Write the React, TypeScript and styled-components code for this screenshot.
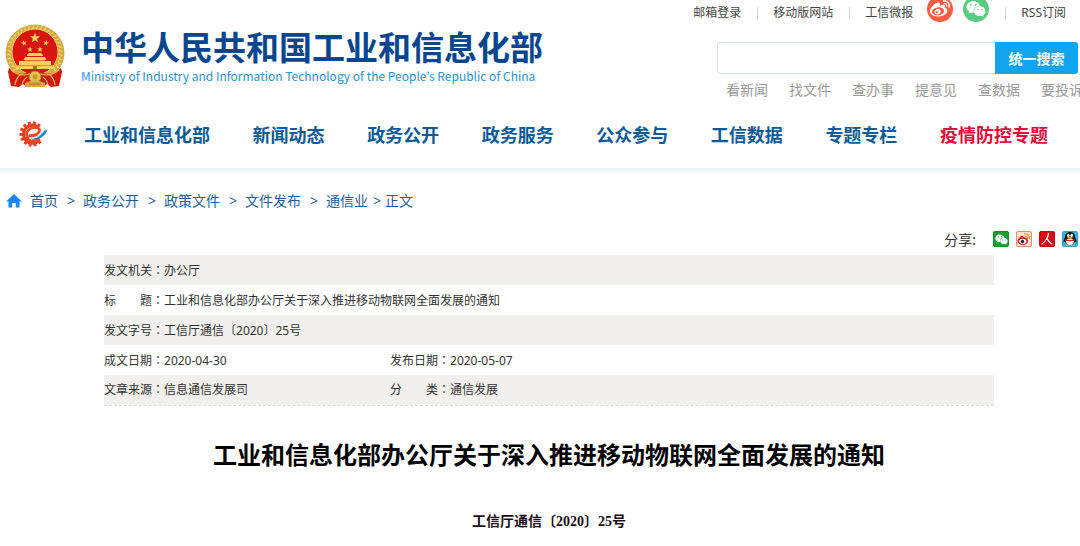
import React from 'react';
import styled, { createGlobalStyle } from 'styled-components';
import { FaWeibo, FaWeixin } from 'react-icons/fa';

const sans = '"Noto Sans", "Noto Sans CJK SC", sans-serif';
const cjk = '"Noto Sans CJK SC", sans-serif';

const GlobalStyle = createGlobalStyle`
  *, *::before, *::after { box-sizing: border-box; }
  body {
    margin: 0;
    background: #fff;
    color: #333;
    font-family: ${sans};
    font-size: 12px;
    overflow: hidden;
  }
  a { color: inherit; text-decoration: none; white-space: nowrap; }
  ul, ol { list-style: none; margin: 0; padding: 0; }
  h1, h2, p { margin: 0; }
  svg { display: block; }
`;

const Header = styled.header`
  display: flex;
  justify-content: space-between;
  height: 102px;
  overflow: hidden;
`;

const Brand = styled.a`
  display: flex;
  align-items: flex-start;
  gap: 16px;
  padding: 24px 0 0 5px;
`;

const BrandText = styled.span`
  display: flex;
  flex-direction: column;
  gap: 2px;
  padding-top: 2px;
`;

const BrandName = styled.strong`
  color: #06468f;
  font-family: ${cjk};
  font-size: 33px;
  line-height: 40px;
  font-weight: 700;
`;

const BrandEnglish = styled.span`
  color: #2b93d1;
  font-family: "Noto Sans CJK KR", sans-serif;
  font-size: 12px;
  line-height: 16px;
`;

const HeaderSide = styled.div`
  width: 363px;
  flex: none;
`;

const TopLinks = styled.nav`
  display: flex;
  align-items: flex-start;
  justify-content: flex-end;
  height: 42px;
  padding-right: 14px;
  line-height: 26px;
  color: #444;
`;

const Divider = styled.span`
  flex: none;
  width: 1px;
  height: 12px;
  margin: 7px 15px 0 16px;
  background: #d8d5d0;
`;

const RoundLink = styled.a<{ $bg: string }>`
  display: grid;
  place-items: center;
  width: 26px;
  height: 26px;
  margin: -4px 0 0 10px;
  border-radius: 50%;
  background: ${p => p.$bg};
  color: #fff;
`;

const SocialGroup = styled.span`
  display: flex;
  padding-left: 4px;
`;

const SearchForm = styled.form`
  display: flex;
  height: 32px;
  margin-right: 2px;
`;

const SearchInput = styled.input`
  flex: 1;
  min-width: 0;
  padding: 0 10px;
  border: 1px solid #d5e3ec;
  border-right: 0;
  border-radius: 3px 0 0 3px;
  background: #fff;
  font: 14px ${sans};
  outline: none;
`;

const SearchButton = styled.button`
  width: 83px;
  padding: 0;
  border: 0;
  border-radius: 0 3px 3px 0;
  background: #10a5ee;
  color: #fff;
  font: 700 14px ${cjk};
`;

const QuickLinks = styled.ul`
  display: flex;
  gap: 21px;
  padding: 6px 0 0 9px;
  color: #999;
  font-size: 14px;
  line-height: 20px;
`;

const MainNav = styled.nav`
  display: flex;
  align-items: center;
  gap: 36px;
  height: 66px;
  padding: 0 32px 2px 19px;
`;

const NavList = styled.ul`
  display: flex;
  flex: 1;
  justify-content: space-between;
  font-family: ${cjk};
  font-size: 18px;
  line-height: 26px;
  font-weight: 700;
`;

const NavLink = styled.a<{ $alert?: boolean }>`
  color: ${p => (p.$alert ? '#e6093c' : '#0c5a96')};
`;

const NavShade = styled.div`
  height: 8px;
  background: linear-gradient(#ebf0f3, #fff);
`;

const Breadcrumb = styled.nav`
  display: flex;
  align-items: center;
  gap: 8px;
  height: 50px;
  padding-left: 6px;
  color: #1f5e9c;
  font-size: 14px;
  line-height: 20px;
`;

const CrumbMark = styled.span`
  padding-left: 1px;
`;

const CrumbTail = styled.span`
  display: flex;
  gap: 4px;
`;

const ShareBar = styled.div`
  display: flex;
  align-items: center;
  justify-content: flex-end;
  gap: 7px;
  height: 29px;
  padding: 0 2px 3px 0;
  font-size: 14px;
`;

const ShareLabel = styled.span`
  margin-right: 10px;
`;

const ShareLink = styled.a<{ $bg: string; $edge: string }>`
  display: grid;
  place-items: center;
  width: 16px;
  height: 16px;
  border: 1px solid ${p => p.$edge};
  border-radius: 2px;
  background: ${p => p.$bg};
  color: #fff;
`;

const Article = styled.main`
  margin: 0 86px 0 104px;
`;

const MetaTable = styled.table`
  width: 100%;
  table-layout: fixed;
  border-collapse: collapse;
  border-bottom: 1px dashed #ddd;
`;

const LeadColumn = styled.col`
  width: 286px;
`;

const MetaRow = styled.tr`
  &:nth-child(odd) { background: #f1f0ee; }
`;

const MetaCell = styled.td`
  height: 30px;
  padding: 0;
  line-height: 18px;
  white-space: nowrap;
`;

const Colon = styled.span`
  font-family: "Noto Sans CJK JP", sans-serif;
`;

const Title = styled.h1`
  margin-top: 30px;
  color: #000;
  font-family: ${cjk};
  font-size: 24px;
  line-height: 36px;
  font-weight: 700;
  text-align: center;
  white-space: nowrap;
`;

const DocNumber = styled.p`
  margin-top: 40px;
  color: #1a0d14;
  font-family: "Liberation Serif", "Noto Sans CJK SC", serif;
  font-size: 14px;
  line-height: 20px;
  font-weight: 700;
  text-align: center;
`;

const STAR = 'M0-1L.24-.32.95-.31.38.12.59.81 0 .4-.59.81-.38.12-.95-.31-.24-.32Z';

function Emblem() {
  const ears = Array.from({ length: 30 }, (_, i) => 140 + i * (260 / 29));
  return (
    <svg width="60" height="65" viewBox="0 0 60 65" aria-hidden="true">
      <ellipse cx="30" cy="29" rx="29" ry="28" fill="#d8ac3e" />
      <g fill="none" stroke="#f1d878" strokeWidth="1">
        {ears.map(a => (
          <path key={a} d="M24 -1.5q2 3 4 1.5" transform={`translate(30 29) rotate(${a})`} />
        ))}
      </g>
      <ellipse cx="30" cy="29" rx="29" ry="28" fill="none" stroke="#c09a3c" strokeWidth=".8" />
      <circle cx="30" cy="28" r="23" fill="#d9150f" stroke="#f0cf63" strokeWidth="1" />
      <g fill="#f4d257">
        <path d={STAR} transform="translate(30 14) scale(5.4)" />
        <path d={STAR} transform="translate(19 19) rotate(-15) scale(3)" />
        <path d={STAR} transform="translate(41 19) rotate(15) scale(3)" />
        <path d={STAR} transform="translate(25 25.500) scale(3)" />
        <path d={STAR} transform="translate(35 25.500) scale(3)" />
        <path d="M22 31l2-2h12l2 2v1H22ZM20 33h20l1.500 3h-23ZM14 37h32v4h3v4H11v-4h3Z" />
      </g>
      <path d="M20 36.500h20M12 41.500h36" stroke="#c4912b" strokeWidth=".8" />
      <path d="M28 42h4v3h-4Z" fill="#b96f1c" />
      <path d="M4 44q8 8 18 5l8 3 8-3q10 3 18-5l1 4-3 14-8 1-4-3-4 3-8-4-8 4-4-3-4 3-8-1-3-14Z" fill="#d41710" />
      <path d="M6 46q8 7 19 4M54 46q-8 7-19 4M10 61q1-7 5-10M50 61q-1-7-5-10M17 61q1-5 5-8M43 61q-1-5-5-8" fill="none" stroke="#e8bb48" strokeWidth="1.200" />
      <circle cx="30" cy="53" r="6" fill="#e8c250" stroke="#b57d21" strokeWidth="1" />
      <circle cx="30" cy="53" r="2.400" fill="#c8952e" />
      <path d="M20 59q10-5 20 0v4H20Z" fill="#d9aa3b" />
      <path d="M24 60h12" stroke="#a97320" strokeWidth="1" />
    </svg>
  );
}

function GearMark() {
  const teeth = [48, 74, 100, 126, 152, 178, 204, 230, 256, 282, 308];
  return (
    <svg width="29" height="26" viewBox="0 0 29 26" aria-hidden="true">
      <g fill="#ee4023">
        {teeth.map(a => (
          <rect key={a} x="9" y="-1.500" width="3.600" height="3" transform={`translate(13 13) rotate(${a})`} />
        ))}
      </g>
      <path d="M20 19.500A9 9 0 1 1 19.500 6.500" fill="none" stroke="#ee3a20" strokeWidth="3" />
      <path
        d="M9.500 15Q20 14.500 20.500 9.500Q20.500 6 14.500 6.500Q8 8 7.500 13.500Q8 20 14.500 20Q18 20 21 18"
        fill="none"
        stroke="#f04a25"
        strokeWidth="2.800"
      />
      <path d="M11 17.500Q19 18.500 23 12Q25 9 28.500 8.500Q27 14 21.500 17Q15.500 20 11 17.500Z" fill="#2383c2" />
      <path d="M10 16.700Q18 17.500 22.500 11.500Q24 9.500 26.500 8.800Q22 15 17 17Q13 18 10 16.700Z" fill="#a5dcf3" />
    </svg>
  );
}

function HomeMark() {
  return (
    <svg width="16" height="14" viewBox="0 0 16 14" aria-hidden="true">
      <path d="M8 0L16 7.500H13.500V13.500H9.800V9H6.200V13.500H2.500V7.500H0Z" fill="#1989fa" />
    </svg>
  );
}

function WeiboShare() {
  return (
    <svg width="14" height="14" viewBox="0 0 14 14" aria-hidden="true">
      <path d="M7 2q5-1 5.500 5M8 4.500q2.500 0 2.500 2.500" fill="none" stroke="#f7a233" strokeWidth="1.400" />
      <ellipse cx="5.800" cy="9" rx="5.300" ry="4" fill="#e01e25" />
      <path d="M1.500 6L5 3.500 7 5.500Z" fill="#e01e25" />
      <ellipse cx="5.700" cy="9.300" rx="3.500" ry="2.600" fill="#fff" />
      <circle cx="5.500" cy="9.500" r="1.700" fill="#222" />
    </svg>
  );
}

function PersonShare() {
  return (
    <svg width="14" height="14" viewBox="0 0 14 14" aria-hidden="true">
      <path d="M8.500 1.500Q7.500 8 2 12M7.500 7Q8.500 10 12 12" fill="none" stroke="#fff" strokeWidth="1.300" strokeLinecap="round" />
    </svg>
  );
}

function PenguinShare() {
  return (
    <svg width="14" height="14" viewBox="0 0 14 14" aria-hidden="true">
      <path d="M7 0Q12 0 12 5Q14 8 13.500 10.500L12 9.500Q11 13 7 13T2 9.500L.5 10.500Q0 8 2 5Q2 0 7 0Z" fill="#161616" />
      <ellipse cx="7" cy="9.800" rx="3.800" ry="3.200" fill="#fff" />
      <ellipse cx="5.300" cy="3.400" rx="1.300" ry="1.600" fill="#fff" />
      <ellipse cx="8.700" cy="3.400" rx="1.300" ry="1.600" fill="#fff" />
      <ellipse cx="7" cy="5.700" rx="2.800" ry=".9" fill="#f6a21b" />
      <path d="M2 7q5 2 10 0v1.300q-5 2-10 0Z" fill="#e3202a" />
      <path d="M2 13.500q2-2 4.500 0ZM7.500 13.500q2-2 4.500 0Z" fill="#f6a21b" />
    </svg>
  );
}

const quickLinks = ['看新闻', '找文件', '查办事', '提意见', '查数据', '要投诉'];
const navItems = ['工业和信息化部', '新闻动态', '政务公开', '政务服务', '公众参与', '工信数据', '专题专栏', '疫情防控专题'];
const crumbs = ['首页', '政务公开', '政策文件', '文件发布'];
const meta: [string, string][][] = [
  [['发文机关', '办公厅']],
  [['标　　题', '工业和信息化部办公厅关于深入推进移动物联网全面发展的通知']],
  [['发文字号', '工信厅通信〔2020〕25号']],
  [['成文日期', '2020-04-30'], ['发布日期', '2020-05-07']],
  [['文章来源', '信息通信发展司'], ['分　　类', '通信发展']],
];

export default function App() {
  return (
    <>
      <GlobalStyle />
      <Header>
        <Brand href="#">
          <Emblem />
          <BrandText>
            <BrandName>中华人民共和国工业和信息化部</BrandName>
            <BrandEnglish>Ministry of Industry and Information Technology of the People’s Republic of China</BrandEnglish>
          </BrandText>
        </Brand>
        <HeaderSide>
          <TopLinks aria-label="快捷入口">
            <a href="#">邮箱登录</a>
            <Divider />
            <a href="#">移动版网站</a>
            <Divider />
            <a href="#">工信微报</a>
            <SocialGroup>
              <RoundLink href="#" $bg="#fc5c42" aria-label="微博"><FaWeibo size={20} /></RoundLink>
              <RoundLink href="#" $bg="#5bcb82" aria-label="微信"><FaWeixin size={20} /></RoundLink>
            </SocialGroup>
            <Divider />
            <a href="#">RSS订阅</a>
          </TopLinks>
          <SearchForm onSubmit={e => e.preventDefault()}>
            <SearchInput type="text" aria-label="搜索" />
            <SearchButton type="submit">统一搜索</SearchButton>
          </SearchForm>
          <QuickLinks>
            {quickLinks.map(t => <li key={t}><a href="#">{t}</a></li>)}
          </QuickLinks>
        </HeaderSide>
      </Header>

      <MainNav aria-label="主导航">
        <GearMark />
        <NavList>
          {navItems.map((t, i) => (
            <li key={t}><NavLink href="#" $alert={i === navItems.length - 1}>{t}</NavLink></li>
          ))}
        </NavList>
      </MainNav>
      <NavShade />

      <Breadcrumb aria-label="当前位置">
        <HomeMark />
        {crumbs.map(t => (
          <React.Fragment key={t}>
            <a href="#">{t}</a>
            <CrumbMark>&gt;</CrumbMark>
          </React.Fragment>
        ))}
        <CrumbTail>
          <a href="#">通信业</a>
          <CrumbMark>&gt;</CrumbMark>
          <span>正文</span>
        </CrumbTail>
      </Breadcrumb>

      <ShareBar>
        <ShareLabel>分享:</ShareLabel>
        <ShareLink href="#" $bg="#14a02e" $edge="#0d9127" aria-label="微信"><FaWeixin size={13} /></ShareLink>
        <ShareLink href="#" $bg="#fde3cf" $edge="#f08a70" aria-label="新浪微博"><WeiboShare /></ShareLink>
        <ShareLink href="#" $bg="#dc0510" $edge="#c9040e" aria-label="人民微博"><PersonShare /></ShareLink>
        <ShareLink href="#" $bg="#36b5ea" $edge="#2aa3d8" aria-label="QQ"><PenguinShare /></ShareLink>
      </ShareBar>

      <Article>
        <MetaTable>
          <colgroup>
            <LeadColumn />
            <col />
          </colgroup>
          <tbody>
            {meta.map((cells, r) => (
              <MetaRow key={r}>
                {cells.map(([label, value]) => (
                  <MetaCell key={label} colSpan={cells.length === 1 ? 2 : 1}>
                    {label}<Colon>：</Colon>{value}
                  </MetaCell>
                ))}
              </MetaRow>
            ))}
          </tbody>
        </MetaTable>
        <Title>工业和信息化部办公厅关于深入推进移动物联网全面发展的通知</Title>
        <DocNumber>工信厅通信〔2020〕25号</DocNumber>
      </Article>
    </>
  );
}
